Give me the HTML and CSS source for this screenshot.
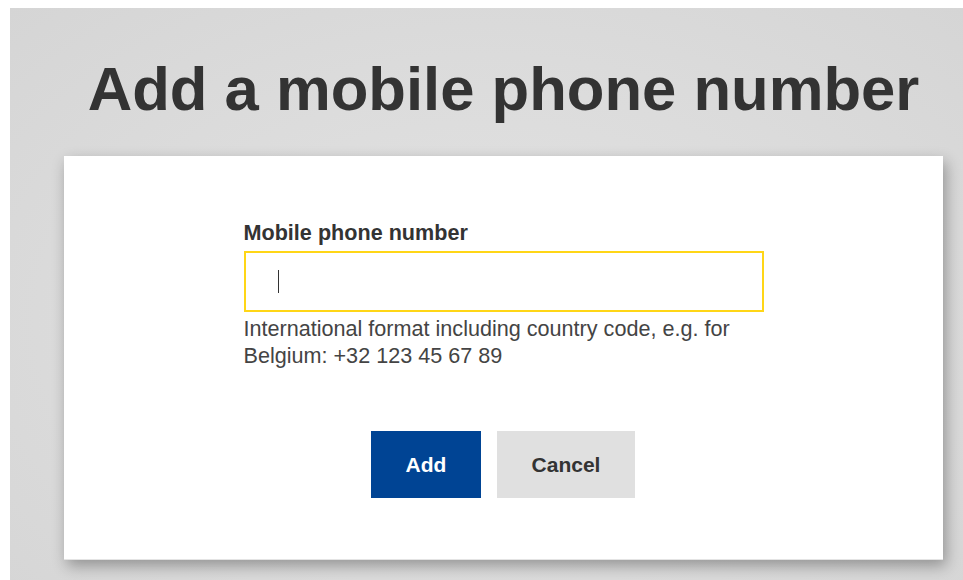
FILE: index.html
```html
<!DOCTYPE html>
<html lang="en">
<head>
<meta charset="utf-8">
<title>Add a mobile phone number</title>
<link rel="stylesheet" href="styles.css">
</head>
<body>
<main class="page">
  <h1 class="page-title">Add a mobile phone number</h1>
  <section class="card">
    <form class="form">
      <label class="field-label" for="mobile">Mobile phone number</label>
      <div class="field-input">
        <span class="caret"></span>
      </div>
      <p class="field-help">International format including country code, e.g. for Belgium: +32 123 45 67 89</p>
      <div class="actions">
        <button type="button" class="btn btn-primary">Add</button>
        <button type="button" class="btn btn-secondary">Cancel</button>
      </div>
    </form>
  </section>
</main>
</body>
</html>
```
FILE: styles.css
```css
html, body {
  margin: 0;
  padding: 0;
  background: #fff;
  height: 100%;
  overflow: hidden;
}

body {
  font-family: "Liberation Sans", Arial, sans-serif;
  color: #333;
}

.page {
  margin: 8px 0 0 10px;
  height: 572px;
  background: radial-gradient(ellipse at 50% 55%, #e3e3e3 0%, #dbdbdb 60%, #d5d5d5 100%);
  padding: 0 20px 0 54px;
  box-sizing: border-box;
  display: flex;
  flex-direction: column;
  align-items: stretch;
}

.page-title {
  margin: 0;
  padding-top: 45px;
  font-size: 61.6px;
  line-height: 72px;
  font-weight: 700;
  text-align: center;
  color: #333;
}

.card {
  margin-top: 31px;
  height: 404px;
  background: #fff;
  box-shadow: 3px 6px 14px rgba(0, 0, 0, 0.32);
  border-bottom: 1px solid #e4e4e4;
  box-sizing: border-box;
  display: flex;
  justify-content: center;
}

.form {
  width: 520px;
  padding-top: 63px;
  display: flex;
  flex-direction: column;
}

.field-label {
  font-size: 21.6px;
  font-weight: 700;
  line-height: 27px;
  color: #333;
}

.field-input {
  margin-top: 5px;
  height: 61px;
  border: 2px solid #ffd617;
  box-sizing: border-box;
  display: flex;
  align-items: center;
  padding-left: 32px;
}

.caret {
  width: 1px;
  height: 23px;
  background: #333;
}

.field-help {
  margin: 3px 0 0;
  font-size: 21.6px;
  line-height: 27px;
  color: #444;
}

.actions {
  margin-top: 62px;
  padding-right: 1px;
  display: flex;
  justify-content: center;
  gap: 16px;
}

.btn {
  height: 67px;
  border: 0;
  font-family: "Liberation Sans", Arial, sans-serif;
  font-size: 21px;
  font-weight: 700;
  padding: 0;
  cursor: pointer;
}

.btn-primary {
  width: 110px;
  background: #004494;
  color: #fff;
}

.btn-secondary {
  width: 138px;
  background: #e0e0e0;
  color: #333;
}
```
